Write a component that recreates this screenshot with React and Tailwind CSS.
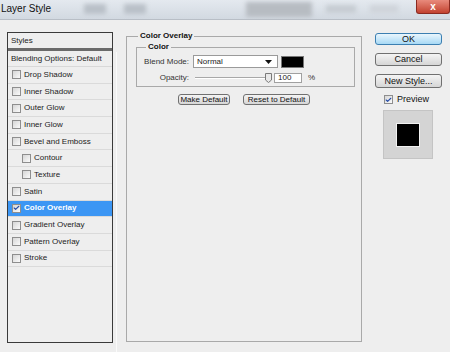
import { Check } from 'lucide-react';

const styleRows = [
  { label: 'Drop Shadow' },
  { label: 'Inner Shadow' },
  { label: 'Outer Glow' },
  { label: 'Inner Glow' },
  { label: 'Bevel and Emboss' },
  { label: 'Contour', indent: true },
  { label: 'Texture', indent: true },
  { label: 'Satin' },
  { label: 'Color Overlay', checked: true },
  { label: 'Gradient Overlay' },
  { label: 'Pattern Overlay' },
  { label: 'Stroke' },
];

function Box({ checked }) {
  return (
    <span className="flex h-[9px] w-[9px] shrink-0 items-center justify-center border border-[#8e8e8e] bg-gradient-to-br from-[#d6d6d6] to-[#fbfbfb]">
      {checked && <Check size={8} strokeWidth={4} className="text-[#2a4fa8]" />}
    </span>
  );
}

function Button({ children, primary, className = '' }) {
  const tone = primary
    ? 'border-[#3c7fb1] from-[#eaf6fd] to-[#a7d9f5]'
    : 'border-[#707070] from-[#f4f4f4] to-[#d6d6d6]';
  return (
    <div
      className={`flex items-center justify-center rounded-[3px] border bg-gradient-to-b text-[#111] ${tone} ${className}`}
    >
      {children}
    </div>
  );
}

export default function App() {
  return (
    <div className="flex h-[352px] w-[450px] flex-col overflow-hidden bg-[#eeeeee] font-['Liberation_Sans',Arial,sans-serif] text-[#222]">
      {/* Title bar */}
      <div className="flex h-[20px] shrink-0 items-start overflow-hidden border-b border-[#b8bec6] bg-gradient-to-b from-[#e4e9ef] to-[#d2d9e1]">
        <span className="ml-[1px] mt-[3px] text-[10px] leading-[12px] text-[#111]">Layer Style</span>
        <div className="ml-[33px] mt-[4px] h-[10px] w-[22px] bg-[#b9c0c8] blur-[2px]" />
        <div className="ml-[18px] mt-[4px] h-[10px] w-[22px] bg-[#b9c0c8] blur-[2px]" />
        <div className="ml-[100px] mt-[2px] h-[15px] w-[66px] bg-[#b7bcc2] blur-[2px]" />
        <div className="ml-[14px] mt-[5px] h-[8px] w-[30px] bg-[#c6ccd2] blur-[2px]" />
        <div className="ml-[14px] mt-[5px] h-[8px] w-[28px] bg-[#cfd4da] blur-[2px]" />
        <div className="ml-auto flex h-[14px] w-[34px] items-center justify-center rounded-b-[3px] border border-t-0 border-[#8a2a20] bg-gradient-to-b from-[#e88a7c] to-[#c2402e] text-[10px] font-bold leading-none text-white">
          x
        </div>
      </div>

      <div className="flex flex-1">
        {/* Styles list */}
        <div className="ml-[7px] mt-[12px] flex h-[311px] w-[106px] flex-col border border-[#3a3a3a] text-[8px] leading-none">
          <div className="flex h-[15px] items-center pl-[3px]">Styles</div>
          <div className="h-[3px] bg-[#6a6a6a]" />
          <div className="flex h-[16px] items-center border-b border-[#d8d8d8] pl-[3px]">
            Blending Options: Default
          </div>
          {styleRows.map((row) => (
            <div
              key={row.label}
              className={`flex h-[16.7px] items-center gap-[3px] border-b border-[#dadada] ${
                row.indent ? 'pl-[14px]' : 'pl-[4px]'
              } ${row.checked ? 'bg-[#3c96f4] font-bold text-white' : ''}`}
            >
              <Box checked={row.checked} />
              <span>{row.label}</span>
            </div>
          ))}
        </div>

        {/* Divider highlight */}
        <div className="ml-[3px] mt-[32px] h-[308px] w-px bg-[#fafafa]" />

        {/* Color Overlay panel */}
        <fieldset className="ml-[9px] mt-[10px] h-[312px] w-[236px] border border-[#a9a9a9] text-[8px] leading-none">
          <legend className="ml-[11px] px-[2px] text-[8px] font-bold leading-[12px] text-[#111]">Color Overlay</legend>
          <fieldset className="ml-[9px] mt-[-1px] h-[46px] w-[219px] border border-[#a9a9a9]">
            <legend className="ml-[9px] px-[2px] font-bold leading-[12px] text-[#111]">Color</legend>
            <div className="mt-[2px] grid grid-cols-[52px_1fr] items-center gap-x-[4px] gap-y-[5px]">
              <span className="text-right text-[#333]">Blend Mode:</span>
              <div className="flex items-center gap-[3px]">
                <div className="flex h-[13px] w-[85px] items-center justify-between border border-[#9a9a9a] bg-white pl-[3px] pr-[5px] text-[#222]">
                  <span>Normal</span>
                  <svg width="7" height="4" viewBox="0 0 7 4">
                    <path d="M0 0H7L3.5 4Z" fill="#111" />
                  </svg>
                </div>
                <div className="h-[12px] w-[23px] border border-[#777] bg-black" />
              </div>
              <span className="text-right text-[#333]">Opacity:</span>
              <div className="flex items-center">
                <div className="relative ml-[2px] h-[10px] w-[77px]">
                  <div className="mt-[4px] h-[2px] w-[75px] border-y border-t-[#a8a8a8] border-b-[#ffffff] bg-[#cfcfcf]" />
                  <svg className="absolute left-[70px] top-0" width="7" height="10" viewBox="0 0 7 10">
                    <path d="M0.5 0.5H6.5V7L3.5 9.5L0.5 7Z" fill="#e8e8e8" stroke="#7a7a7a" />
                  </svg>
                </div>
                <div className="ml-[2px] flex h-[10px] w-[28px] items-center border border-[#a0a0a0] bg-white pl-[3px] text-[#222]">
                  100
                </div>
                <span className="ml-[6px] text-[#333]">%</span>
              </div>
            </div>
          </fieldset>
          <div className="ml-[51px] mt-[7px] flex gap-[13px]">
            <Button className="h-[11px] w-[52px]">Make Default</Button>
            <Button className="h-[11px] w-[67px]">Reset to Default</Button>
          </div>
        </fieldset>

        {/* Right column */}
        <div className="ml-[13px] mt-[13px] flex flex-col text-[9px] leading-none">
          <Button primary className="h-[12px] w-[67px]">OK</Button>
          <Button className="mt-[8px] h-[13px] w-[67px]">Cancel</Button>
          <Button className="mt-[8px] h-[14px] w-[67px]">New Style...</Button>
          <div className="ml-[9px] mt-[7px] flex items-center gap-[4px] text-[#111]">
            <Box checked />
            <span>Preview</span>
          </div>
          <div className="ml-[8px] mt-[6px] flex h-[49px] w-[50px] items-center justify-center border border-[#c4c4c4] bg-[#d4d4d4]">
            <div className="h-[24px] w-[24px] border border-[#f2f2f2] bg-black" />
          </div>
        </div>
      </div>
    </div>
  );
}
